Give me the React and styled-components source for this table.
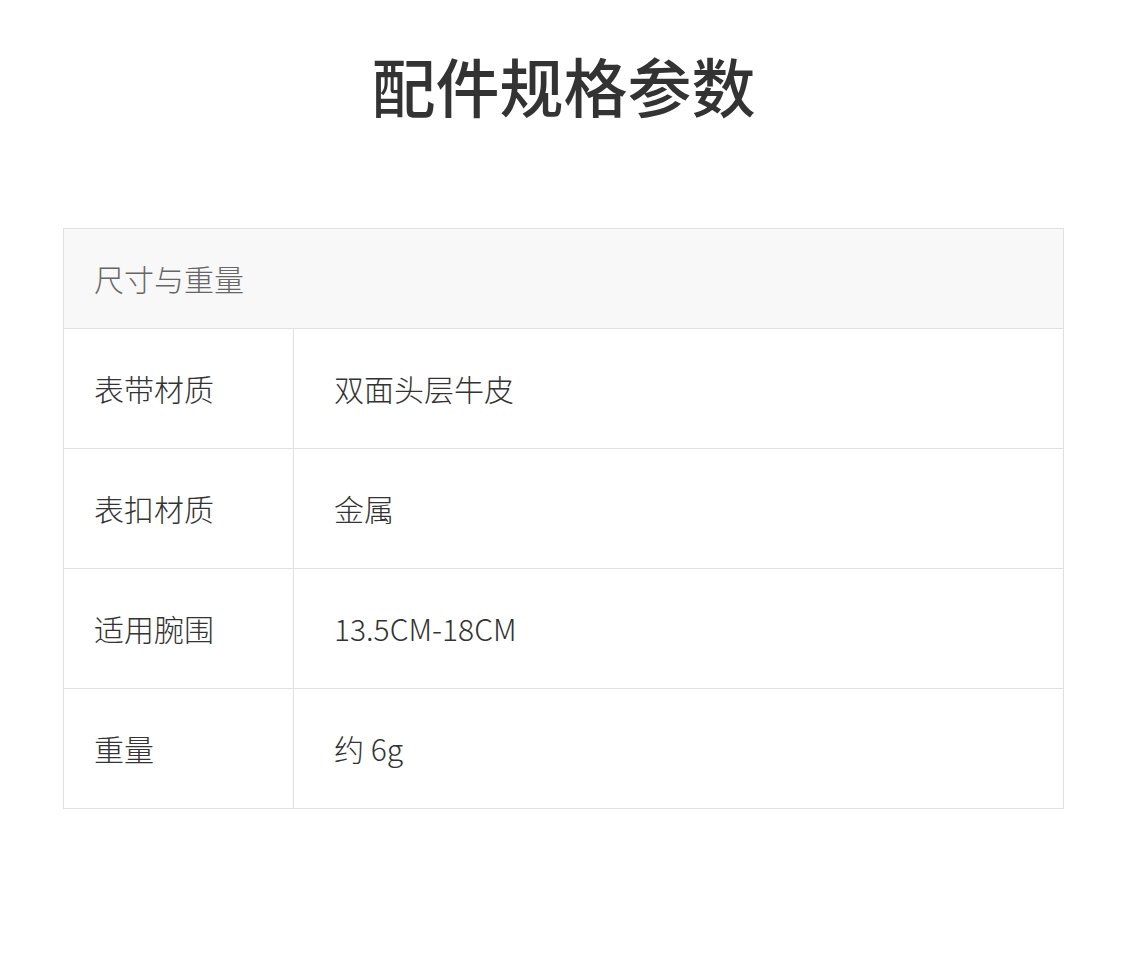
import styled, { createGlobalStyle } from 'styled-components';

const GlobalStyle = createGlobalStyle`
  *, *::before, *::after {
    box-sizing: border-box;
  }

  body {
    margin: 0;
    background: #fff;
    font-family: "Noto Sans CJK SC", "Noto Sans", sans-serif;
  }
`;

const specs = [
  { label: '表带材质', value: '双面头层牛皮' },
  { label: '表扣材质', value: '金属' },
  { label: '适用腕围', value: '13.5CM-18CM' },
  { label: '重量', value: '约 6g' },
];

export default function App() {
  return (
    <Page>
      <GlobalStyle />
      <Title>配件规格参数</Title>
      <SpecTable>
        <GroupHeader>尺寸与重量</GroupHeader>
        {specs.map(spec => (
          <SpecRow key={spec.label}>
            <Label>{spec.label}</Label>
            <Value>{spec.value}</Value>
          </SpecRow>
        ))}
      </SpecTable>
    </Page>
  );
}

const Page = styled.div`
  width: 1125px;
  height: 959px;
  padding: 40px 61px 0 63px;
`;

const Title = styled.h1`
  margin: 0 0 99px;
  height: 89px;
  line-height: 89px;
  text-align: center;
  font-size: 64px;
  font-weight: 500;
  color: #333;
`;

const SpecTable = styled.div`
  border: 1px solid #e0e0e0;
  border-bottom: none;
`;

const GroupHeader = styled.div`
  height: 100px;
  background: #f8f8f8;
  border-bottom: 1px solid #e0e0e0;
  display: flex;
  align-items: center;
  padding: 0 0 2px 30px;
  font-size: 30px;
  font-weight: 300;
  color: #666;
`;

const SpecRow = styled.div`
  display: grid;
  grid-template-columns: 230px 1fr;
  height: 120px;
  border-bottom: 1px solid #e0e0e0;
`;

const Label = styled.div`
  display: flex;
  align-items: center;
  padding: 0 0 2px 30px;
  border-right: 1px solid #e0e0e0;
  font-size: 30px;
  font-weight: 300;
  color: #333;
`;

const Value = styled.div`
  display: flex;
  align-items: center;
  padding: 0 0 2px 40px;
  font-size: 30px;
  font-weight: 300;
  color: #333;
`;
